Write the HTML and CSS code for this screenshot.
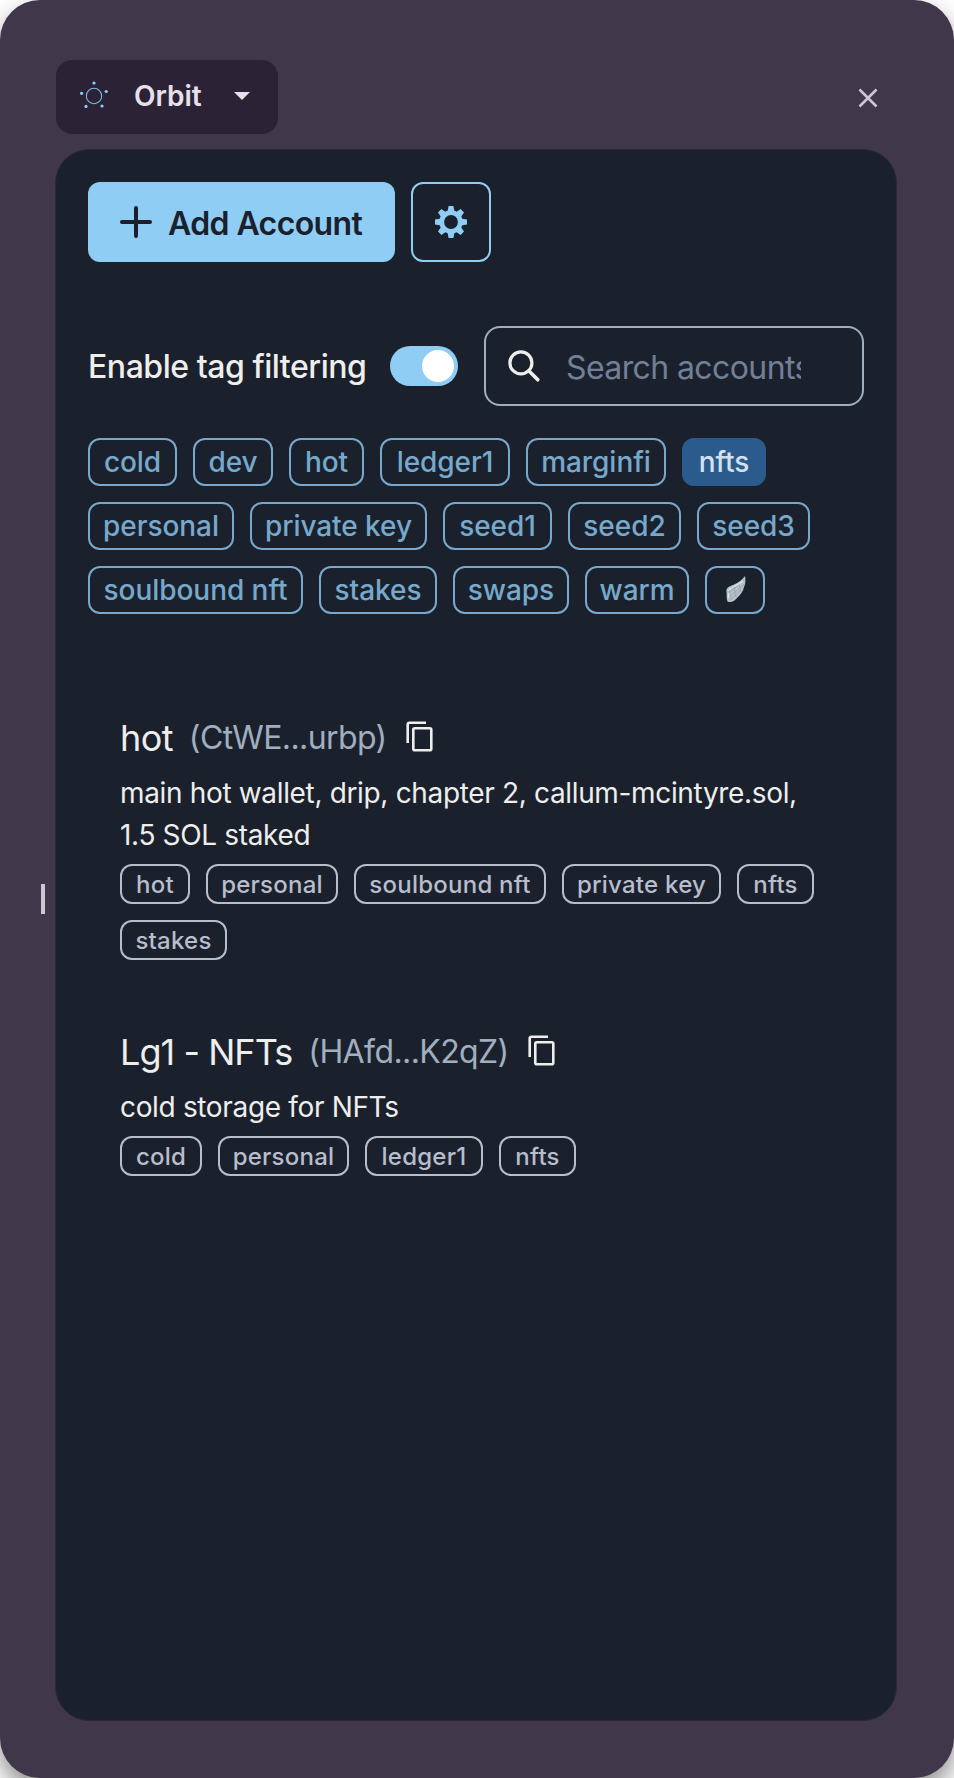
FILE: index.html
```html
<!DOCTYPE html>
<html lang="en">
<head>
<meta charset="utf-8">
<title>Orbit</title>
<link rel="stylesheet" href="styles.css">
</head>
<body>
<div class="window">
  <div class="resize-handle"></div>
  <header class="topbar">
    <button class="app-select">
      <svg class="logo" width="30" height="30" viewBox="0 0 30 30"><circle cx="15" cy="16" r="7.7" fill="none" stroke="#7db9e0" stroke-width="1.1"/><g fill="#90cdf4"><circle cx="15" cy="3" r="1.6"/><circle cx="2.6" cy="13.3" r="1.6"/><circle cx="27.2" cy="11.5" r="1.6"/><circle cx="7" cy="26.4" r="1.6"/><circle cx="23" cy="26" r="1.6"/></g></svg>
      <span class="app-name">Orbit</span>
      <svg class="caret" width="16" height="8" viewBox="0 0 16 8"><path d="M0 0h16L8 8z" fill="#e8e0e8"/></svg>
    </button>
    <svg class="close" width="20" height="20" viewBox="0 0 20 20"><path d="M1.5 1.5l17 17M18.5 1.5l-17 17" stroke="#cfc6d1" stroke-width="2.6"/></svg>
  </header>
  <main class="panel">
    <div class="actions">
      <button class="add"><svg width="32" height="32" viewBox="0 0 32 32"><path d="M16 2v28M2 16h28" stroke="#1a202c" stroke-width="4" stroke-linecap="round"/></svg><span class="add-text">Add Account</span></button>
      <button class="settings"><svg width="32" height="32" viewBox="0 0 32 32"><g fill="#90cdf4"><path id="tooth" d="M13.6 0h4.8l1.2 6h-7.2zM13.6 32h4.8l1.2-6h-7.2zM0 13.6v4.8l6 1.2v-7.2zM32 13.6v4.8l-6 1.2v-7.2z"/><use href="#tooth" transform="rotate(45 16 16)"/></g><circle cx="16" cy="16" r="9.3" fill="none" stroke="#90cdf4" stroke-width="4.8"/></svg></button>
    </div>
    <div class="filters">
      <span class="filter-label">Enable tag filtering</span>
      <span class="switch"><span class="thumb"></span></span>
      <div class="search"><svg width="34" height="34" viewBox="0 0 34 34" fill="none" stroke="#eeeeec" stroke-linecap="round"><circle cx="13.9" cy="13.9" r="11" stroke-width="3.2"/><path d="M22 22l8.8 8.8" stroke-width="3.6"/></svg><span class="placeholder">Search accounts</span></div>
    </div>
    <div class="tags">
      <span class="tag" style="width:89px">cold</span><span class="tag" style="width:80px">dev</span><span class="tag" style="width:75px">hot</span><span class="tag" style="width:130px">ledger1</span><span class="tag" style="width:140px">marginfi</span><span class="tag selected" style="width:84px">nfts</span><span class="tag" style="width:146px">personal</span><span class="tag" style="width:177px">private key</span><span class="tag" style="width:109px">seed1</span><span class="tag" style="width:113px">seed2</span><span class="tag" style="width:113px">seed3</span><span class="tag" style="width:215px">soulbound nft</span><span class="tag" style="width:118px">stakes</span><span class="tag" style="width:116px">swaps</span><span class="tag" style="width:104px">warm</span><span class="tag wing"><svg width="28" height="28" viewBox="0 0 28 28"><path d="M24 0C25 5 24 9 23 11C22 16 19 19 16 22C13 25.500 10 27 6.500 25.500C5 22 6 19 5.500 16C4.500 12 8 10.500 12 9C17 7 21 4 24 0Z" fill="#b4c2c8"/><path d="M23 4C19 9 13 12 9 16M23 8C19 13 14 15 10 20M20 14C16 17 13 20 10 24M8 13l2 10M13 11l2 10M18 8l2 8" fill="none" stroke="#93a5ae" stroke-width="0.8"/><path d="M22 5C18 9 10 11 7.500 14.500M7.500 17v5" fill="none" stroke="#dce4e6" stroke-width="1.2"/></svg></span>
    </div>
    <section class="accounts">
      <article class="account">
        <div class="title"><h2>hot</h2><span class="address">(CtWE...urbp)</span><svg class="copy" width="28" height="32" viewBox="0 0 28 32" fill="none" stroke="#eeeeec" stroke-width="2.6"><path d="M1.700 22V3.500q0-1.800 1.800-1.800h16.500"/><rect x="7.300" y="7.300" width="18" height="22" rx="1.500"/></svg></div>
        <p>main hot wallet, drip, chapter 2, callum-mcintyre.sol, 1.5 SOL staked</p>
        <div class="chips"><span class="chip" style="width:70px">hot</span><span class="chip" style="width:132px">personal</span><span class="chip" style="width:192px">soulbound nft</span><span class="chip" style="width:159px">private key</span><span class="chip" style="width:77px">nfts</span><span class="chip" style="width:107px">stakes</span></div>
      </article>
      <article class="account">
        <div class="title"><h2 class="spaced">Lg1 - NFTs</h2><span class="address">(HAfd...K2qZ)</span><svg class="copy" width="28" height="32" viewBox="0 0 28 32" fill="none" stroke="#eeeeec" stroke-width="2.6"><path d="M1.700 22V3.500q0-1.800 1.800-1.800h16.500"/><rect x="7.300" y="7.300" width="18" height="22" rx="1.500"/></svg></div>
        <p>cold storage for NFTs</p>
        <div class="chips"><span class="chip" style="width:82px">cold</span><span class="chip" style="width:131px">personal</span><span class="chip" style="width:118px">ledger1</span><span class="chip" style="width:77px">nfts</span></div>
      </article>
    </section>
  </main>
</div>
</body>
</html>
```
FILE: styles.css
```css
* { box-sizing: border-box; }
body { margin: 0; background: #fff; font-family: Inter, "Liberation Sans", sans-serif; color: #eeeeec; overflow: hidden; }
button { font: inherit; border: 0; margin: 0; padding: 0; }
svg { display: block; flex: none; }
.window { position: relative; width: 954px; height: 1778px; border-radius: 40px; background: #40374b; box-shadow: 0 12px 24px rgba(0, 0, 0, 0.45); padding: 60px 57px 57px 55px; display: flex; flex-direction: column; }
.resize-handle { position: absolute; left: 41px; top: 884px; width: 4px; height: 30px; background: #cdc5cf; }
.topbar { display: flex; justify-content: space-between; align-items: flex-start; height: 89px; padding: 0 19px 0 1px; }
.app-select { width: 222px; height: 74px; border-radius: 16px; background: #2b2335; color: #e8e0e8; display: flex; align-items: center; padding-left: 23px; }
.logo { margin-bottom: 4px; }
.app-name { width: 70px; margin-left: 25px; font-size: 28px; line-height: 34px; font-weight: 600; white-space: nowrap; margin-bottom: 2px; text-align: left; }
.caret { margin-left: 30px; margin-bottom: 2px; }
.close { margin-top: 28px; }
.panel { flex: 1; width: 842px; border-radius: 34px; background: #1b212c; border: 1px solid #2d2737; padding: 32px; }
.actions { display: flex; gap: 16px; }
.add { width: 307px; height: 80px; border-radius: 12px; background: #90cdf4; color: #1a202c; display: flex; align-items: center; gap: 16px; padding-left: 32px; font-size: 32px; font-weight: 600; letter-spacing: -0.6px; white-space: nowrap; }
.add-text { padding-top: 2px; }
.settings { width: 80px; height: 80px; border: 2px solid #90cdf4; border-radius: 12px; background: none; display: flex; align-items: center; justify-content: center; }
.filters { display: flex; align-items: center; margin-top: 64px; }
.filter-label { width: 302px; padding-top: 1px; font-size: 32px; font-weight: 500; letter-spacing: -0.46px; white-space: nowrap; }
.switch { width: 68px; height: 40px; border-radius: 20px; background: #90cdf4; padding: 4px; display: flex; justify-content: flex-end; margin-right: 26px; }
.thumb { width: 32px; height: 32px; border-radius: 50%; background: #fff; }
.search { width: 380px; height: 80px; border: 2px solid #a0aec0; border-radius: 16px; display: flex; align-items: center; padding-left: 21px; }
.placeholder { width: 235px; margin-left: 25px; padding-top: 3px; overflow: hidden; white-space: nowrap; color: #718096; font-size: 32px; line-height: 40px; letter-spacing: -0.6px; }
.tags { display: flex; flex-wrap: wrap; gap: 16px; margin-top: 32px; width: 776px; }
.tag { height: 48px; border: 2px solid #77a9cc; border-radius: 12px; color: #77a9cc; font-size: 28px; font-weight: 460; letter-spacing: -0.05px; line-height: 45px; text-align: center; white-space: nowrap; }
.selected { background: #2a5b8c; border-color: #2a5b8c; color: #d5e0ef; }
.wing { width: 60px; padding: 8px 14px; }
.accounts { padding: 96px 32px 0; display: flex; flex-direction: column; gap: 64px; }
.title { display: flex; align-items: center; height: 56px; }
h2 { margin: 0; font-size: 36px; font-weight: 400; line-height: 54px; letter-spacing: -0.6px; white-space: nowrap; }
.spaced { letter-spacing: -0.95px; }
.address { margin-left: 16px; font-size: 32px; line-height: 48px; letter-spacing: -0.6px; color: #a0aec0; white-space: nowrap; }
.copy { margin-left: 19px; margin-bottom: 2px; }
p { margin: 6px 0 8px; font-size: 28px; line-height: 42px; letter-spacing: -0.34px; width: 700px; }
.chips { display: flex; flex-wrap: wrap; gap: 16px; width: 716px; }
.chip { height: 40px; border: 2px solid #b8bdcc; border-radius: 12px; color: #b8bdcc; font-size: 24px; font-weight: 460; letter-spacing: 0.25px; line-height: 38px; text-align: center; white-space: nowrap; }
```
